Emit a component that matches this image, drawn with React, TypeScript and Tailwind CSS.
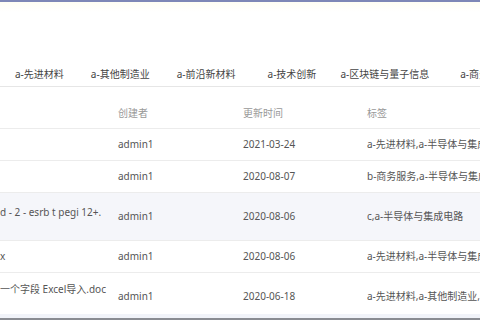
import React from "react";

const tabs = [
  { t: "a-先进材料", ml: "ml-[15px]" },
  { t: "a-其他制造业", ml: "ml-[27px]" },
  { t: "a-前沿新材料", ml: "ml-[27px]" },
  { t: "a-技术创新", ml: "ml-[32px]" },
  { t: "a-区块链与量子信息", ml: "ml-[24px]" },
  { t: "a-商务服务", ml: "ml-[31px]" },
];

type Row = { name: string; user: string; date: string; tag: string; h: string; bg?: string; nameCls: string };

const rows: Row[] = [
  { name: "", user: "admin1", date: "2021-03-24", tag: "a-先进材料,a-半导体与集成电路", h: "h-[32px]", nameCls: "" },
  { name: "", user: "admin1", date: "2020-08-07", tag: "b-商务服务,a-半导体与集成电路", h: "h-[32px]", nameCls: "" },
  { name: "d - 2 - esrb t pegi 12+.", user: "admin1", date: "2020-08-06", tag: "c,a-半导体与集成电路", h: "h-[48px]", bg: "bg-[#f5f6fa]", nameCls: "-mt-[8px]" },
  { name: "x", user: "admin1", date: "2020-08-06", tag: "a-先进材料,a-半导体与集成电路", h: "h-[32px]", nameCls: "" },
  { name: "一个字段 Excel导入.doc", user: "admin1", date: "2020-06-18", tag: "a-先进材料,a-其他制造业,a-前沿新材料", h: "h-[48px]", nameCls: "-mt-[14px]" },
];

export default function App() {
  return (
    <div
      className="w-[480px] h-[320px] bg-white overflow-hidden flex flex-col"
      style={{ fontFamily: '"Noto Sans", "Noto Sans CJK SC", sans-serif' }}
    >
      <div className="h-[2px] bg-[#7e87b6] shrink-0" />
      <div className="h-[10px] bg-gradient-to-b from-[#fffef3] to-white shrink-0" />
      <div className="h-[50px] shrink-0" />
      <div className="h-[25px] flex items-center border-b border-[#e6e6e6] shrink-0 text-[10px] text-[#444] whitespace-nowrap overflow-hidden">
        {tabs.map((x) => (
          <span key={x.t} className={`${x.ml} shrink-0`}>{x.t}</span>
        ))}
      </div>
      <div className="h-[12px] shrink-0" />
      <div className="h-[30px] grid grid-cols-[118px_125px_124px_1fr] items-center border-b border-[#ececec] text-[10px] text-[#999] shrink-0">
        <span />
        <span>创建者</span>
        <span>更新时间</span>
        <span>标签</span>
      </div>
      <div className="flex-1 overflow-hidden flex flex-col">
        {rows.map((r, i) => (
          <div
            key={i}
            className={`${r.h} ${r.bg ?? ""} grid grid-cols-[118px_125px_124px_1fr] items-center border-b border-[#ececec] text-[10px] text-[#555] shrink-0`}
          >
            <span className={`whitespace-nowrap overflow-hidden ${r.nameCls}`}>{r.name}</span>
            <span>{r.user}</span>
            <span>{r.date}</span>
            <span className="whitespace-nowrap overflow-hidden">{r.tag}</span>
          </div>
        ))}
      </div>
      <div className="h-[4px] bg-[#f1f3f9] shrink-0" />
      <div className="h-[2px] bg-[#8a8c92] shrink-0" />
    </div>
  );
}
